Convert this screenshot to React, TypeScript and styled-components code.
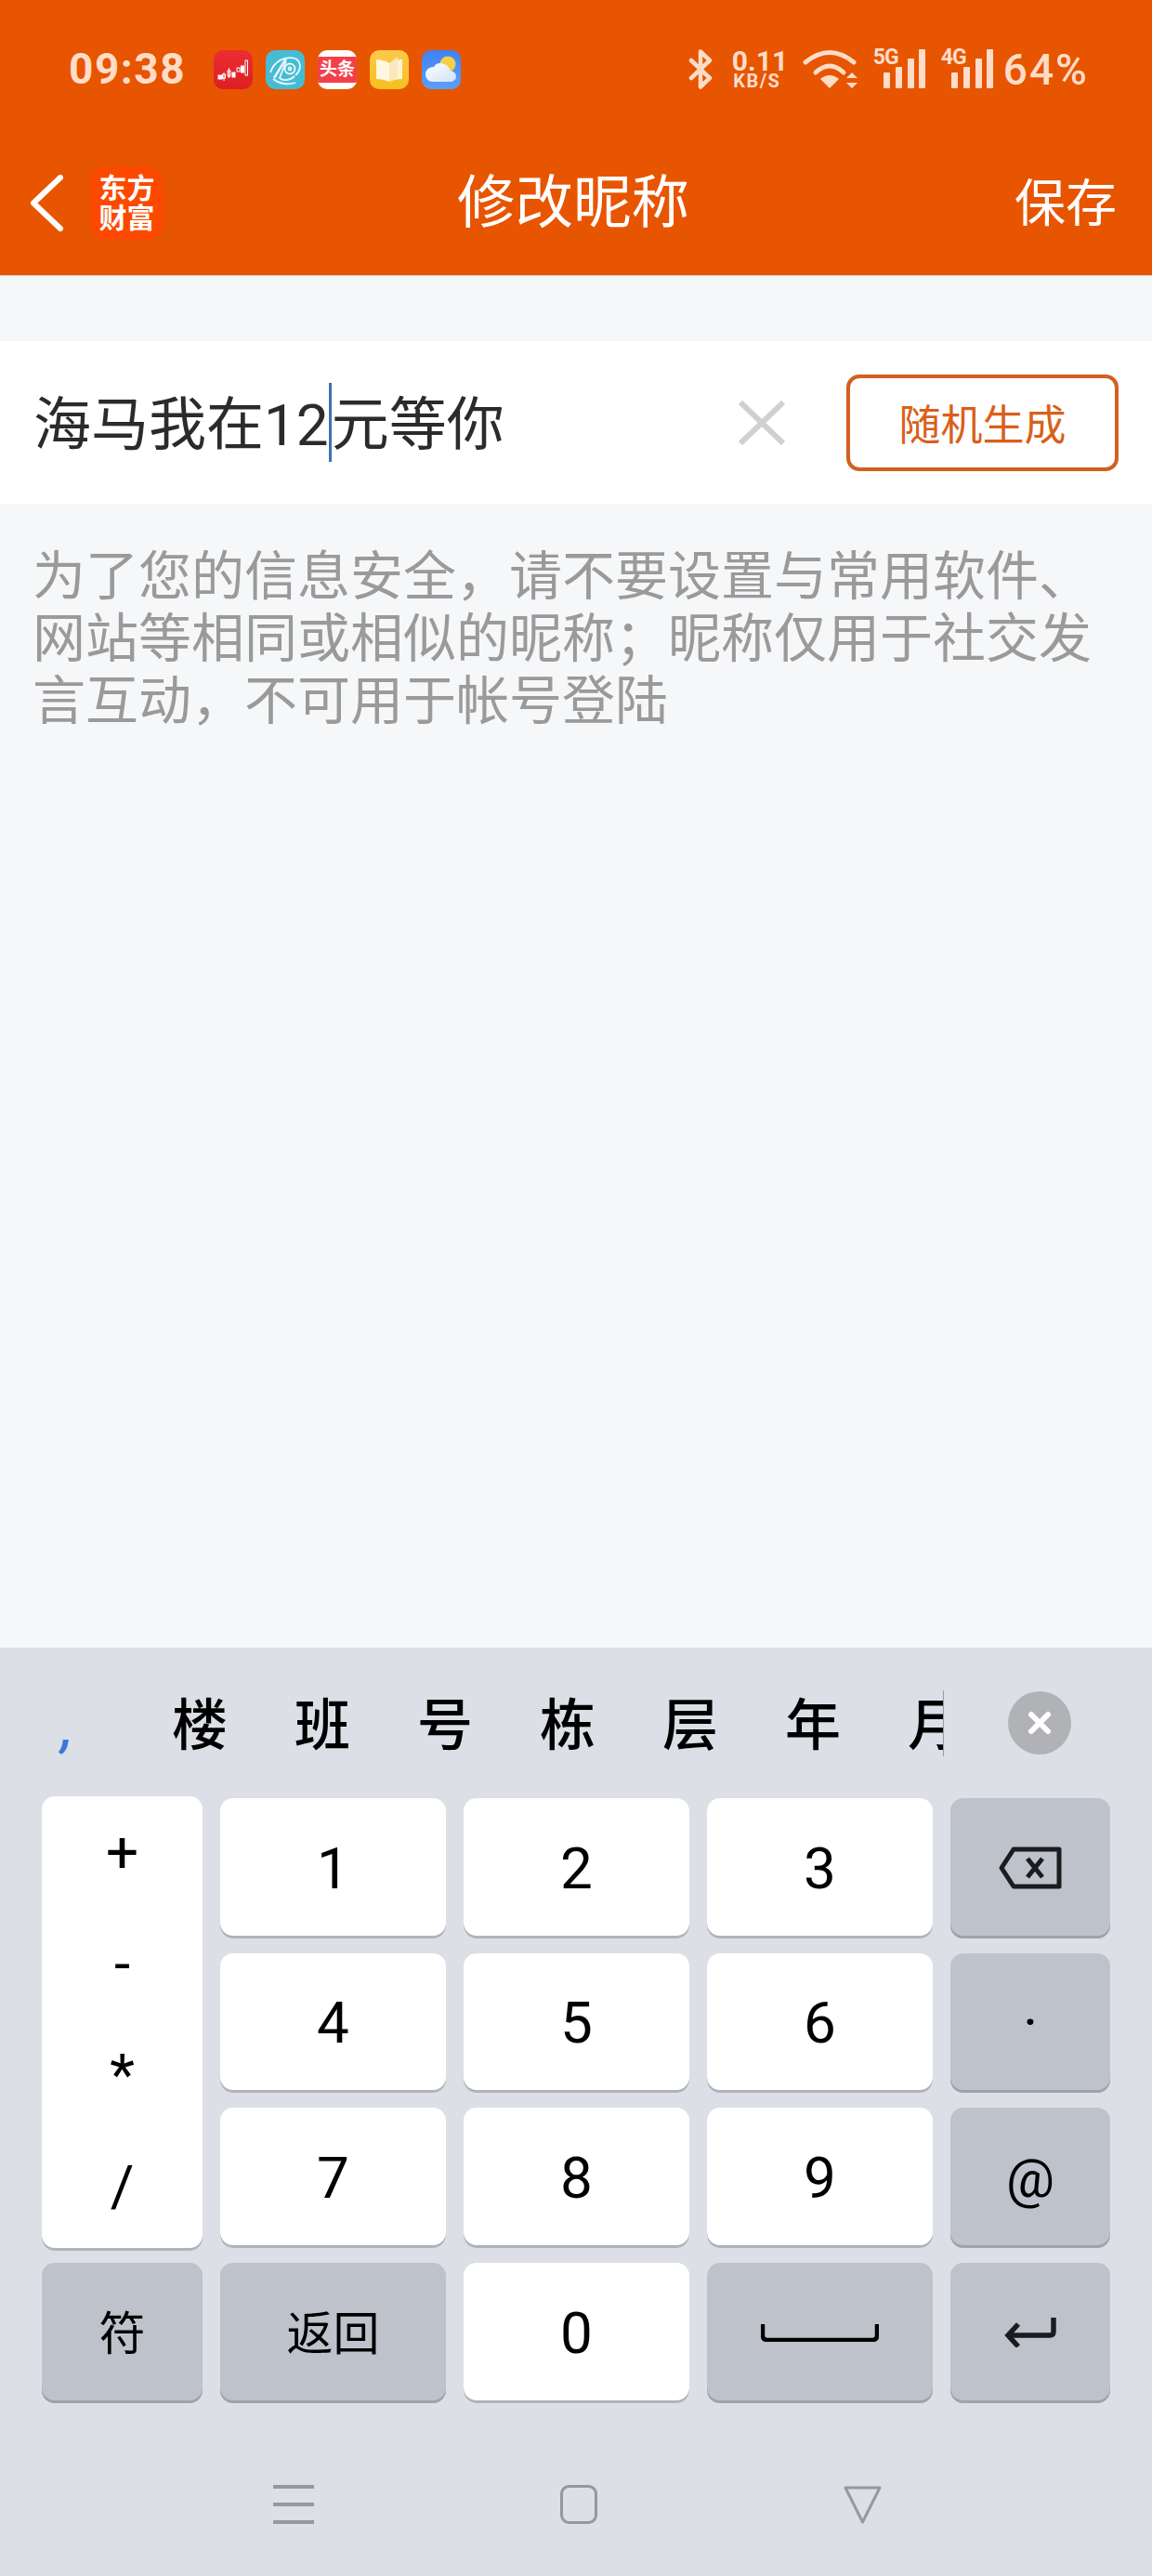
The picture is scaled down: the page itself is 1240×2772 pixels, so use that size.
import React from 'react';
import styled, { createGlobalStyle } from 'styled-components';

const FONT = `Roboto, "Noto Sans CJK SC", sans-serif`;
const STATUS_COLOR = '#fedcc8';

const GlobalStyle = createGlobalStyle`
    html, body {
        margin: 0;
        padding: 0;
        background: #f6f7f9;
    }
    * {
        box-sizing: border-box;
    }
`;

const Page = styled.div`
    width: 1240px;
    height: 2772px;
    display: flex;
    flex-direction: column;
    overflow: hidden;
    background: #f6f7f9;
    font-family: ${FONT};
`;

const Header = styled.header`
    height: 297px;
    flex: none;
    background: #e75500;
    border-bottom: 1px solid #d9d2cc;
`;

const StatusBar = styled.div`
    height: 150px;
    display: flex;
    align-items: flex-start;
    padding: 53px 68px 0 74px;
    color: ${STATUS_COLOR};
`;

const Time = styled.div`
    width: 156px;
    font-size: 46px;
    font-weight: 700;
    line-height: 43px;
    letter-spacing: 1.5px;
`;

const AppIcons = styled.div`
    display: flex;
    gap: 14px;
    margin-top: 1px;
`;

const AppIcon = styled.div<{ $bg: string }>`
    width: 42px;
    height: 42px;
    border-radius: 10px;
    overflow: hidden;
    display: flex;
    align-items: center;
    justify-content: center;
    background: ${props => props.$bg};
`;

const NewsBand = styled.div`
    width: 100%;
    height: 28px;
    background: #f43f4a;
    color: #fff;
    font-size: 19px;
    font-weight: 700;
    line-height: 28px;
    text-align: center;
    white-space: nowrap;
`;

const StatusRight = styled.div`
    margin-left: auto;
    display: flex;
    align-items: flex-start;
`;

const Speed = styled.div`
    margin: 0 22px 0 21px;
    width: 54px;
    text-align: center;
    font-weight: 700;
`;

const SpeedValue = styled.div`
    font-size: 30px;
    line-height: 26px;
`;

const SpeedUnit = styled.div`
    font-size: 20px;
    line-height: 16px;
    letter-spacing: 1.5px;
    white-space: nowrap;
`;

const Signal = styled.div<{ $gap: number }>`
    position: relative;
    width: 56px;
    height: 42px;
    margin-left: ${props => props.$gap}px;
    display: flex;
    justify-content: flex-end;
`;

const SignalLabel = styled.span`
    position: absolute;
    left: 0;
    top: -3px;
    font-size: 23px;
    font-weight: 700;
    line-height: 24px;
    letter-spacing: -1px;
`;

const Battery = styled.div`
    margin: 0 0 0 11px;
    font-size: 46px;
    font-weight: 500;
    line-height: 44px;
    letter-spacing: 2px;
`;

const NavBar = styled.div`
    height: 137px;
    display: grid;
    grid-template-columns: 1fr auto 1fr;
    align-items: center;
    padding: 0 38px 0 32px;
    color: #fff;
`;

const NavLeft = styled.div`
    display: flex;
    align-items: center;
    gap: 29px;
`;

const Logo = styled.div`
    width: 79px;
    height: 79px;
    border-radius: 18px;
    background: #fb4a00;
    color: #fff;
    font-size: 30px;
    font-weight: 700;
    line-height: 32px;
    text-align: center;
    display: flex;
    align-items: center;
    justify-content: center;
`;

const Title = styled.div`
    font-size: 62.5px;
    line-height: 72px;
`;

const Save = styled.div`
    justify-self: end;
    font-size: 55px;
    letter-spacing: 0;
    line-height: 64px;
`;

const InputRow = styled.div`
    height: 175px;
    flex: none;
    margin-top: 70px;
    background: #fff;
    display: flex;
    align-items: center;
    padding: 0 36px 0 36px;
`;

const InputValue = styled.div`
    flex: 1;
    display: flex;
    align-items: center;
    color: #2b2b2b;
    font-size: 62px;
    line-height: 85px;
`;

const InputText = styled.span`
    position: relative;
    top: 3px;
`;

const Caret = styled.span`
    width: 3px;
    height: 85px;
    background: #3b73b5;
`;

const RandomButton = styled.div`
    width: 293px;
    height: 104px;
    margin-left: 66px;
    border: 4px solid #d2601f;
    border-radius: 14px;
    color: #d9601a;
    font-size: 45px;
    display: flex;
    align-items: center;
    justify-content: center;
`;

const Hint = styled.p`
    flex: 1;
    margin: 0;
    padding: 45px 38px 0 35px;
    color: #9a9a9a;
    font-size: 57px;
    line-height: 67px;
`;

const Keyboard = styled.section`
    height: 999px;
    flex: none;
    background: #dcdfe6;
`;

const CandidateBar = styled.div`
    height: 160px;
    display: flex;
    align-items: center;
    padding-top: 2px;
`;

const CandidateStrip = styled.div`
    width: 1016px;
    height: 71px;
    padding: 0 0 6px 66px;
    display: flex;
    align-items: center;
    gap: 72px;
    overflow-x: clip;
    border-right: 1px solid #9a9ca3;
    color: #000;
    font-size: 60px;
    font-weight: 500;
    white-space: nowrap;
`;

const Punctuation = styled.span`
    width: 47px;
    flex: none;
    margin-top: 16px;
    color: #3f77d8;
    font-size: 58px;
    font-weight: 500;
    font-style: italic;
    line-height: 65px;
`;

const Candidate = styled.span`
    flex: none;
`;

const CloseCandidates = styled.div`
    width: 68px;
    height: 68px;
    margin-left: 69px;
    border-radius: 50%;
    background: #b1b2b6;
    display: flex;
    align-items: center;
    justify-content: center;
`;

const KeyGrid = styled.div`
    display: grid;
    grid-template-columns: 173px 243px 243px 243px 172px;
    grid-auto-rows: 150.67px;
    column-gap: 19px;
    row-gap: 16px;
    padding: 2px 0 0 45px;
`;

const Key = styled.div<{ $dark?: boolean; $size?: number }>`
    border-radius: 14px;
    display: flex;
    align-items: center;
    justify-content: center;
    color: #000;
    font-size: ${props => props.$size ?? 62}px;
    background: ${props => (props.$dark ? '#bec2cb' : '#fff')};
    box-shadow: inset 0 -3px 0 ${props => (props.$dark ? '#9fa2ac' : '#b0b3bd')};
`;

const SymbolKey = styled(Key)`
    grid-row: span 3;
    margin: -2px 0 -3px;
    flex-direction: column;
    justify-content: space-around;
    padding-bottom: 10px;
`;

const WordKey = styled(Key)`
    padding-bottom: 7px;
    font-size: 50px;
`;

const SystemNav = styled.div`
    display: flex;
    justify-content: center;
    gap: 265px;
    margin-top: 88px;
    padding-left: 3px;
`;

const Bluetooth = () => (
    <svg width="26" height="43" viewBox="0 0 26 43" fill="none" stroke={STATUS_COLOR} strokeWidth="4.5" strokeLinejoin="round" strokeLinecap="round">
        <path d="M3 12 L23 31 L13 40.5 V2.5 L23 12 L3 31" />
    </svg>
);

const Wifi = () => (
    <svg width="60" height="43" viewBox="0 0 60 43" fill="none" stroke={STATUS_COLOR} strokeWidth="5" strokeLinecap="round">
        <path d="M3 14 Q29 -7 55 14" />
        <path d="M14 25 Q29 11 44 25" />
        <path d="M29 42 L19 32 Q29 24 39 32 Z" fill={STATUS_COLOR} stroke="none" />
        <path d="M53 25 L59 31 H47 Z" fill={STATUS_COLOR} stroke="none" />
        <path d="M53 42 L47 36 H59 Z" fill={STATUS_COLOR} stroke="none" />
    </svg>
);

const SignalBars = () => (
    <svg width="45" height="42" viewBox="0 0 45 42" fill={STATUS_COLOR}>
        <rect x="0" y="25" width="7" height="17" rx="1" />
        <rect x="13" y="19" width="7" height="23" rx="1" />
        <rect x="26" y="10" width="7" height="32" rx="1" />
        <rect x="38" y="0" width="7" height="42" rx="1" />
    </svg>
);

const StockIcon = () => (
    <svg width="42" height="42" viewBox="0 0 42 42" fill="#fff" stroke="#fff" strokeWidth="1">
        <rect x="5" y="27" width="4" height="4" />
        <path d="M11 24 V33" />
        <rect x="9.5" y="26" width="3" height="4" fill="none" />
        <rect x="15" y="22" width="3" height="6" fill="none" />
        <path d="M16.5 19 V30" />
        <rect x="20" y="24" width="3" height="5" />
        <rect x="25" y="19" width="3" height="4" fill="none" />
        <rect x="29.5" y="17" width="3" height="7" />
        <rect x="34" y="11" width="2.5" height="16" fill="none" />
    </svg>
);

const EyeIcon = () => (
    <svg width="42" height="42" viewBox="0 0 42 42" fill="none" stroke="#e9f8fb" strokeWidth="1.8">
        <path d="M5 24 C9 12 20 6 32 9 C39 13 38 22 32 27" />
        <path d="M22 9 L9 30" strokeWidth="2.4" />
        <path d="M22 12 L15 30 C18 33 26 33 31 28" />
        <circle cx="26" cy="20" r="5.5" />
        <circle cx="26" cy="20" r="1.5" />
        <path d="M8 31 C14 36 24 38 32 35" />
    </svg>
);

const BookIcon = () => (
    <svg width="42" height="42" viewBox="0 0 42 42">
        <path d="M7 10 C12 10 17 11 21 14 V34 C17 32 12 31 7 31 Z" fill="#fff7df" />
        <path d="M21 14 L30 7 V28 L21 34 Z" fill="#fbe9bd" />
        <path d="M30 10 H35 V31 C30 31 25 32 21 34 L30 28 Z" fill="#fff2cf" />
    </svg>
);

const WeatherIcon = () => (
    <svg width="42" height="42" viewBox="0 0 42 42">
        <circle cx="28" cy="15" r="8.5" fill="#f5cf45" />
        <path d="M12 34 C6 34 4 29 4 26 C4 21 8 18 13 18 C15 14 20 13 24 15 C28 16 31 20 30 22 C34 22 37 25 37 28 C37 32 34 34 30 34 Z" fill="url(#cloud)" />
        <defs>
            <linearGradient id="cloud" x1="0" y1="0" x2="1" y2="1">
                <stop offset="0" stopColor="#ffffff" />
                <stop offset="1" stopColor="#cfe0f5" />
            </linearGradient>
        </defs>
    </svg>
);

const BackArrow = () => (
    <svg width="36" height="61" viewBox="0 0 36 61" fill="none" stroke="#fff" strokeWidth="6" strokeLinecap="round" strokeLinejoin="round">
        <path d="M33 3 L4 30.5 L33 58" />
    </svg>
);

const ClearIcon = () => (
    <svg width="50" height="48" viewBox="0 0 50 48" stroke="#d0d0d0" strokeWidth="6">
        <path d="M2 2 L48 46 M48 2 L2 46" />
    </svg>
);

const CloseIcon = () => (
    <svg width="26" height="26" viewBox="0 0 26 26" stroke="#fff" strokeWidth="6" strokeLinecap="round">
        <path d="M4 4 L22 22 M22 4 L4 22" />
    </svg>
);

const BackspaceIcon = () => (
    <svg width="68" height="46" viewBox="0 0 68 46" fill="none" stroke="#1b1c1f" strokeWidth="5" strokeLinejoin="round">
        <path d="M16 3 H65 V43 H16 L3 23 Z" />
        <path d="M31 13 L47 33 M47 13 L31 33" />
    </svg>
);

const SpaceIcon = () => (
    <svg width="127" height="19" viewBox="0 0 127 19" fill="none" stroke="#000" strokeWidth="4.5">
        <path d="M2 0 V12 Q2 17 7 17 H120 Q125 17 125 12 V0" />
    </svg>
);

const EnterIcon = () => (
    <svg width="56" height="32" viewBox="0 0 56 32" fill="none" stroke="#1b1c1f" strokeWidth="5.5">
        <path d="M53 0 V15 Q53 19 49 19 H6" />
        <path d="M15 7 L4 19 L15 31" />
    </svg>
);

const MenuIcon = () => (
    <svg width="44" height="42" viewBox="0 0 44 42" fill="#97989c">
        <rect y="0" width="44" height="4" />
        <rect y="19" width="44" height="4" />
        <rect y="38" width="44" height="4" />
    </svg>
);

const HomeIcon = () => (
    <svg width="40" height="42" viewBox="0 0 40 42" fill="none" stroke="#97989c" strokeWidth="3">
        <rect x="1.5" y="1.5" width="37" height="39" rx="8" />
    </svg>
);

const BackIcon = () => (
    <svg width="41" height="42" viewBox="0 0 41 42" fill="none" stroke="#97989c" strokeWidth="3" strokeLinejoin="round">
        <path d="M2 3 H39 L20.5 40 Z" />
    </svg>
);

const candidates = ['楼', '班', '号', '栋', '层', '年', '月'];

const App: React.FC = () => {
    return (
        <Page>
            <GlobalStyle />
            <Header>
                <StatusBar>
                    <Time>09:38</Time>
                    <AppIcons>
                        <AppIcon $bg="linear-gradient(#ea2e34, #dd1f23)"><StockIcon /></AppIcon>
                        <AppIcon $bg="#46bcd4"><EyeIcon /></AppIcon>
                        <AppIcon $bg="#fff"><NewsBand>头条</NewsBand></AppIcon>
                        <AppIcon $bg="linear-gradient(#fdc94a, #f8bf1f)"><BookIcon /></AppIcon>
                        <AppIcon $bg="linear-gradient(#3f82f7, #5aa0f8)"><WeatherIcon /></AppIcon>
                    </AppIcons>
                    <StatusRight>
                        <Bluetooth />
                        <Speed>
                            <SpeedValue>0.11</SpeedValue>
                            <SpeedUnit>KB/S</SpeedUnit>
                        </Speed>
                        <Wifi />
                        <Signal $gap={16}>
                            <SignalLabel>5G</SignalLabel>
                            <SignalBars />
                        </Signal>
                        <Signal $gap={17}>
                            <SignalLabel>4G</SignalLabel>
                            <SignalBars />
                        </Signal>
                        <Battery>64%</Battery>
                    </StatusRight>
                </StatusBar>
                <NavBar>
                    <NavLeft>
                        <BackArrow />
                        <Logo>东方<br />财富</Logo>
                    </NavLeft>
                    <Title>修改昵称</Title>
                    <Save>保存</Save>
                </NavBar>
            </Header>

            <InputRow>
                <InputValue>
                    <InputText>海马我在12</InputText>
                    <Caret />
                    <InputText>元等你</InputText>
                </InputValue>
                <ClearIcon />
                <RandomButton>随机生成</RandomButton>
            </InputRow>

            <Hint>为了您的信息安全，请不要设置与常用软件、网站等相同或相似的昵称；昵称仅用于社交发言互动，不可用于帐号登陆</Hint>

            <Keyboard>
                <CandidateBar>
                    <CandidateStrip>
                        <Punctuation>,</Punctuation>
                        {candidates.map(item => (
                            <Candidate key={item}>{item}</Candidate>
                        ))}
                    </CandidateStrip>
                    <CloseCandidates><CloseIcon /></CloseCandidates>
                </CandidateBar>
                <KeyGrid>
                    <SymbolKey>
                        <span>+</span>
                        <span>-</span>
                        <span>*</span>
                        <span>/</span>
                    </SymbolKey>
                    <Key>1</Key>
                    <Key>2</Key>
                    <Key>3</Key>
                    <Key $dark><BackspaceIcon /></Key>
                    <Key>4</Key>
                    <Key>5</Key>
                    <Key>6</Key>
                    <Key $dark>·</Key>
                    <Key>7</Key>
                    <Key>8</Key>
                    <Key>9</Key>
                    <Key $dark $size={58}>@</Key>
                    <WordKey $dark>符</WordKey>
                    <WordKey $dark>返回</WordKey>
                    <Key>0</Key>
                    <Key $dark><SpaceIcon /></Key>
                    <Key $dark><EnterIcon /></Key>
                </KeyGrid>
                <SystemNav>
                    <MenuIcon />
                    <HomeIcon />
                    <BackIcon />
                </SystemNav>
            </Keyboard>
        </Page>
    );
};

export default App;
